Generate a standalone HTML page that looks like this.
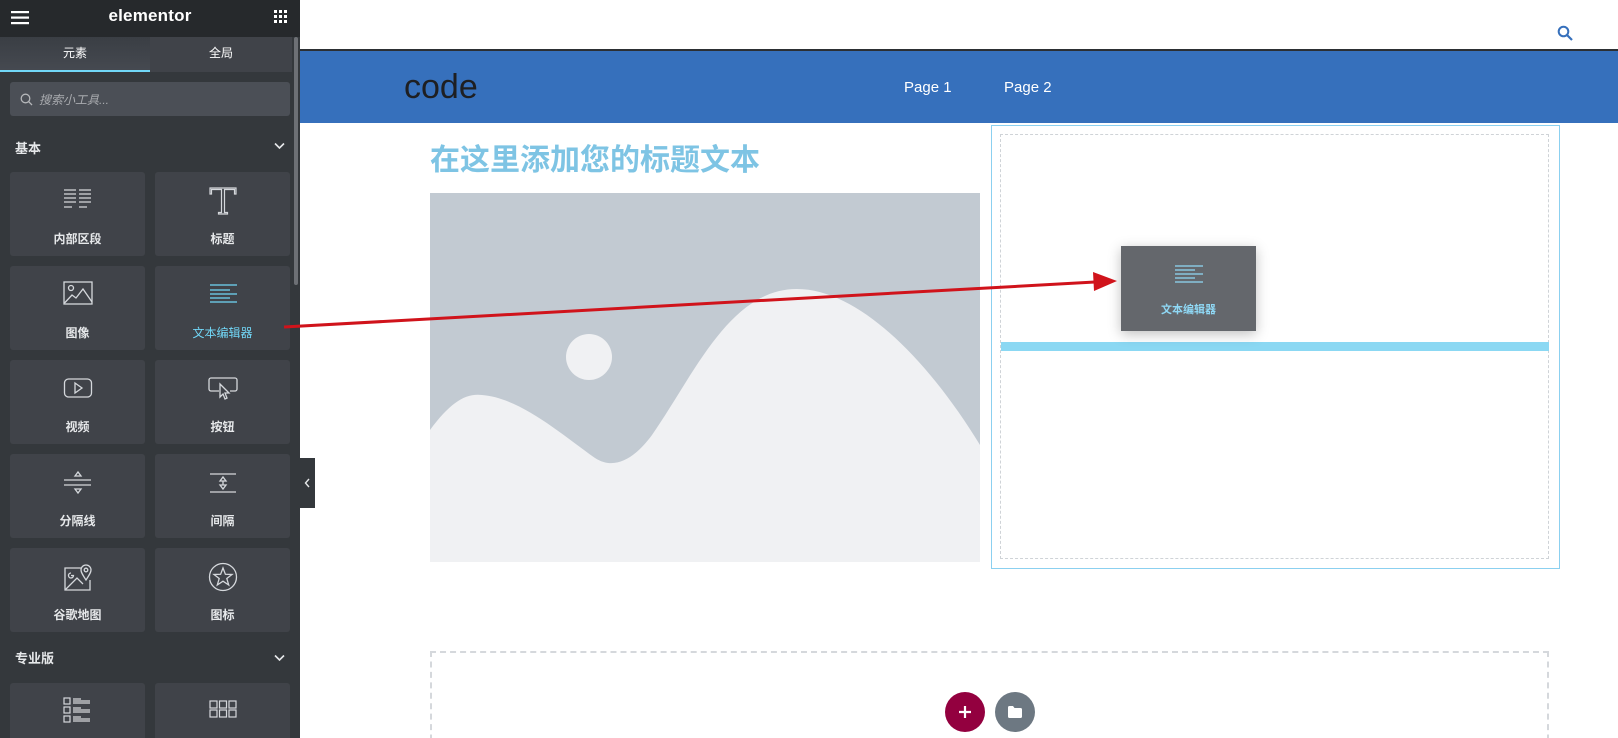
<!DOCTYPE html>
<html style="overflow:hidden"><head><meta charset="utf-8">
<style>
*{margin:0;padding:0;box-sizing:border-box}
html,body{width:1618px;height:738px;overflow:hidden}
body{background:#fff;position:relative;font-family:"Liberation Sans","Noto Sans CJK SC",sans-serif}
#wrap{position:absolute;left:0;top:0;width:1618px;height:738px;overflow:hidden}
.abs{position:absolute}
#side{left:0;top:0;width:300px;height:738px;background:#34383c}
#hdr{left:0;top:0;width:300px;height:37px;background:#26292c}
.tile{position:absolute;width:135px;height:84px;background:#404349;border-radius:3px;color:#e6e8ea;font-size:12px;text-align:center}
.tile svg{position:absolute;left:50%;top:14px;transform:translateX(-50%)}
.tile span{position:absolute;left:0;right:0;top:58px;font-weight:bold}
.sec{color:#e6e8ea;font-size:13px;font-weight:bold}
</style></head><body><div id="wrap">
<div id="side" class="abs"></div>
<div id="hdr" class="abs">
<svg class="abs" style="left:11px;top:10px" width="18" height="15"><rect y="1" width="18" height="2.2" fill="#fff"/><rect y="6.5" width="18" height="2.2" fill="#fff"/><rect y="12" width="18" height="2.2" fill="#fff"/></svg>
<div class="abs" style="left:0;width:300px;top:6px;text-align:center;color:#fff;font-weight:bold;font-size:17px;letter-spacing:0.2px">elementor</div>
<svg class="abs" style="left:274px;top:10px" width="14" height="14" fill="#fff"><rect x="0" y="0" width="3" height="3"/><rect x="5" y="0" width="3" height="3"/><rect x="10" y="0" width="3" height="3"/><rect x="0" y="5" width="3" height="3"/><rect x="5" y="5" width="3" height="3"/><rect x="10" y="5" width="3" height="3"/><rect x="0" y="10" width="3" height="3"/><rect x="5" y="10" width="3" height="3"/><rect x="10" y="10" width="3" height="3"/></svg>
</div>
<div class="abs" style="left:0;top:37px;width:150px;height:35px;background:linear-gradient(#3a3e44,#464a51);color:#fff;font-size:12px;text-align:center;line-height:33px">元素</div>
<div class="abs" style="left:0;top:70px;width:150px;height:2px;background:#71d7f7"></div>
<div class="abs" style="left:150px;top:37px;width:142px;height:35px;background:#404349;color:#fff;font-size:12px;text-align:center;line-height:33px">全局</div>
<div class="abs" style="left:294px;top:37px;width:4px;height:248px;background:#6d7075;border-radius:2px"></div>
<div class="abs" style="left:10px;top:82px;width:280px;height:34px;background:#4b4f56;border-radius:3px"></div>
<svg class="abs" style="left:20px;top:93px" width="13" height="13"><circle cx="5.5" cy="5.5" r="4.3" stroke="#b4b6b9" stroke-width="1.3" fill="none"/><line x1="8.6" y1="8.6" x2="12" y2="12" stroke="#b4b6b9" stroke-width="1.3"/></svg>
<div class="abs" style="left:39px;top:91px;color:#a9abaf;font-size:12px;font-style:italic">搜索小工具...</div>
<div class="abs sec" style="left:15px;top:138px">基本</div>
<svg class="abs" style="left:274px;top:142px" width="11" height="8"><path d="M1 1.5 L5.5 6 L10 1.5" stroke="#e6e8ea" stroke-width="1.6" fill="none"/></svg>

<div class="tile" style="left:10px;top:172px"><svg width="30" height="26" stroke="#d5d8dc" stroke-width="1.3"><path d="M1 4h12M1 8h12M1 12h12M1 16h12M1 21h8M16 4h12M16 8h12M16 12h12M16 16h12M16 21h8"/></svg><span>内部区段</span></div>
<div class="tile" style="left:155px;top:172px"><svg width="30" height="30" stroke="#d5d8dc" stroke-width="1.2" fill="none"><path d="M2 2h26v6h-1.5v-4.5h-10v23h3v1.5h-9v-1.5h3v-23h-10v4.5h-1.5z"/></svg><span>标题</span></div>
<div class="tile" style="left:10px;top:266px"><svg width="30" height="26" stroke="#d5d8dc" stroke-width="1.3" fill="none"><rect x="1" y="2" width="28" height="22"/><circle cx="8" cy="8" r="2.5"/><path d="M1.5 23 L9 15 L13 18 L20 9 L29 22"/></svg><span>图像</span></div>
<div class="tile" style="left:155px;top:266px"><svg width="30" height="26" stroke="#71d7f7" stroke-width="1.3"><path d="M2 5h27M2 10h20M2 14h27M2 18h20M2 22h27"/></svg><span style="color:#71d7f7;font-weight:normal">文本编辑器</span></div>
<div class="tile" style="left:10px;top:360px"><svg width="30" height="26" stroke="#d5d8dc" stroke-width="1.3" fill="none"><rect x="1.5" y="5" width="27" height="18" rx="4"/><path d="M12 9 L19 14 L12 19 Z"/></svg><span>视频</span></div>
<div class="tile" style="left:155px;top:360px"><svg width="30" height="26" stroke="#d5d8dc" stroke-width="1.3" fill="none"><path d="M11 17H3a2 2 0 0 1-2-2V6a2 2 0 0 1 2-2h24a2 2 0 0 1 2 2v9a2 2 0 0 1-2 2h-5"/><path d="M12 10 L12 23 L15 20 L17 25 L19 24 L17 19 L21 19 Z" fill="#404349"/></svg><span>按钮</span></div>
<div class="tile" style="left:10px;top:454px"><svg width="30" height="28" stroke="#d5d8dc" stroke-width="1.3" fill="none"><path d="M12 8 L15 4 L18 8 Z M1 12h27M1 17h27M12 21 L18 21 L15 25 Z"/></svg><span>分隔线</span></div>
<div class="tile" style="left:155px;top:454px"><svg width="30" height="28" stroke="#d5d8dc" stroke-width="1.3" fill="none"><path d="M2 6h26M2 24h26M12 13 L15 9 L18 13 Z M12 17 L18 17 L15 21 Z M15 13v4"/></svg><span>间隔</span></div>
<div class="tile" style="left:10px;top:548px"><svg width="30" height="30" stroke="#d5d8dc" stroke-width="1.3" fill="none"><path d="M19 6H2v22h25V18"/><path d="M2 28 L14 16 L20 22"/><path d="M23 18 C19 12 18 10 18 8 a5 5 0 0 1 10 0 C28 10 27 12 23 18Z"/><circle cx="23" cy="8" r="1.8"/><path d="M8 11a2.5 2.5 0 1 0 2.5 2.5h-2.5"/></svg><span>谷歌地图</span></div>
<div class="tile" style="left:155px;top:548px"><svg width="30" height="30" stroke="#d5d8dc" stroke-width="1.3" fill="none"><circle cx="15" cy="15" r="13.5"/><path d="M15 6 L17.4 12.3 L24 12.5 L18.8 16.5 L20.7 23 L15 19.2 L9.3 23 L11.2 16.5 L6 12.5 L12.6 12.3 Z"/></svg><span>图标</span></div>
<div class="abs sec" style="left:15px;top:648px">专业版</div>
<svg class="abs" style="left:274px;top:654px" width="11" height="8"><path d="M1 1.5 L5.5 6 L10 1.5" stroke="#e6e8ea" stroke-width="1.6" fill="none"/></svg>
<div class="tile" style="left:10px;top:683px;height:55px;border-radius:3px 3px 0 0"><svg width="30" height="28" stroke="#d5d8dc" stroke-width="1.2" fill="none"><rect x="1" y="1" width="6" height="6"/><rect x="1" y="10" width="6" height="6"/><rect x="1" y="19" width="6" height="6"/><path d="M10 2h8M10 4h17M10 6h17M10 11h8M10 13h17M10 15h17M10 20h8M10 22h17M10 24h17"/></svg></div>
<div class="tile" style="left:155px;top:683px;height:55px;border-radius:3px 3px 0 0"><svg width="30" height="24" stroke="#d5d8dc" stroke-width="1.2" fill="none"><rect x="2" y="4" width="7" height="7"/><rect x="11.5" y="4" width="7" height="7"/><rect x="21" y="4" width="7" height="7"/><rect x="2" y="13" width="7" height="7"/><rect x="11.5" y="13" width="7" height="7"/><rect x="21" y="13" width="7" height="7"/></svg></div>
<div class="abs" style="left:300px;top:458px;width:15px;height:50px;background:#34383c"></div>
<svg class="abs" style="left:304px;top:478px" width="7" height="10"><path d="M5 1 L1.5 5 L5 9" stroke="#e6e8ea" stroke-width="1.4" fill="none"/></svg>

<svg class="abs" style="left:1557px;top:25px" width="17" height="17"><circle cx="6.5" cy="6.5" r="4.8" stroke="#3670bc" stroke-width="2" fill="none"/><line x1="10" y1="10" x2="15" y2="15" stroke="#3670bc" stroke-width="2.2"/></svg>
<div class="abs" style="left:300px;top:49px;width:1318px;height:74px;background:#3670bc;border-top:2px solid #2c2f33"></div>
<div class="abs" style="left:404px;top:68px;font-size:34px;color:#1e1f22">code</div>
<div class="abs" style="left:904px;top:79px;font-size:15px;color:#fff">Page 1</div>
<div class="abs" style="left:1004px;top:79px;font-size:15px;color:#fff">Page 2</div>
<div class="abs" style="left:430px;top:135px;font-size:30px;font-weight:bold;color:#7ec4e4">在这里添加您的标题文本</div>
<svg class="abs" style="left:430px;top:193px" width="550" height="369" viewBox="0 0 550 369" preserveAspectRatio="none"><rect width="550" height="369" fill="#c2cad2"/><circle cx="159" cy="164" r="23" fill="#f0f1f3"/><path d="M0 237 C20 210 35 200 52 202 C90 205 130 240 165 265 C185 278 205 265 222 242 C265 180 300 96 367 96 C430 96 500 170 550 252 L550 369 L0 369 Z" fill="#f0f1f3"/></svg>
<div class="abs" style="left:991px;top:125px;width:569px;height:444px;border:1px solid #8bd0f0"></div>
<div class="abs" style="left:1000px;top:134px;width:549px;height:425px;border:1px dashed #cfd3d7"></div>
<div class="abs" style="left:1001px;top:342px;width:548px;height:9px;background:#8bd8f3"></div>
<div class="abs" style="left:1121px;top:246px;width:135px;height:85px;background:#64676c;box-shadow:0 3px 12px rgba(0,0,0,.25)"></div>
<svg class="abs" style="left:1174px;top:264px" width="30" height="22" stroke="#8fd8f5" stroke-width="1.3"><path d="M1 2h28M1 6h20M1 10h28M1 14h20M1 18h28"/></svg>
<div class="abs" style="left:1121px;top:301px;width:135px;text-align:center;font-size:11px;font-weight:bold;color:#8fd8f5">文本编辑器</div>
<svg class="abs" style="left:0;top:0" width="1618" height="738"><line x1="284" y1="327" x2="1095" y2="282" stroke="#d0131b" stroke-width="3"/><path d="M1117 281 L1093 272 L1094 291 Z" fill="#d0131b"/></svg>
<div class="abs" style="left:430px;top:651px;width:1119px;height:100px;border:2px dashed #d5d8dc"></div>
<div class="abs" style="left:945px;top:692px;width:40px;height:40px;border-radius:50%;background:#93003f"></div>
<svg class="abs" style="left:958px;top:705px" width="14" height="14"><path d="M7 1v12M1 7h12" stroke="#fff" stroke-width="2.2"/></svg>
<div class="abs" style="left:995px;top:692px;width:40px;height:40px;border-radius:50%;background:#6d7882"></div>
<svg class="abs" style="left:1008px;top:706px" width="14" height="12"><path d="M0 1.5 Q0 0 1.5 0 H5 L6.5 2 H12.5 Q14 2 14 3.5 V10.5 Q14 12 12.5 12 H1.5 Q0 12 0 10.5 Z" fill="#fff"/></svg>
</div></body></html>
